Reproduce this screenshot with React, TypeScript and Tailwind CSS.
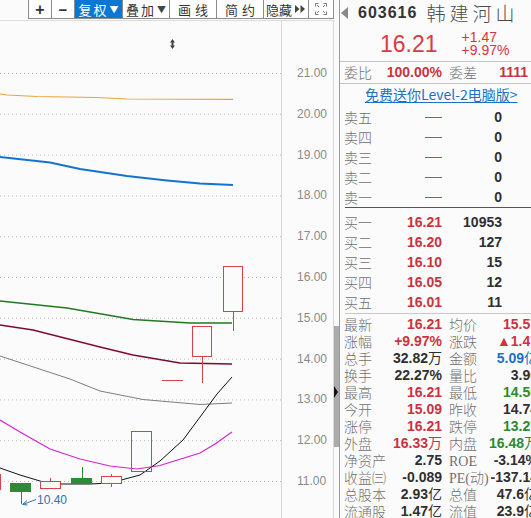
import React from "react";

const Y = (v: number) => 73 + (21 - v) * 40.8;
const ticks = [21, 20, 19, 18, 17, 16, 15, 14, 13, 12, 11];

const RED = "text-[#c9343f]";
const GREEN = "text-[#2d8a2d]";
const DARK = "text-[#2f2f2f]";
const BLUE = "text-[#1d6fc9]";

function Chart() {
  const red = "#d7414c";
  const bg = "#fbfbfb";
  return (
    <svg width={281} height={497} viewBox="0 21 281 497" className="block">
      {ticks.map((t) => (
        <line key={t} x1={0} x2={281} y1={Y(t) + 0.5} y2={Y(t) + 0.5} stroke="#bdbdbd" strokeWidth={1} strokeDasharray="1 3" />
      ))}
      <polyline fill="none" stroke="#e8a53c" strokeWidth={1.2} points="0,94 7,95 37,96.5 97,97.5 127,99 233,99.3" />
      <polyline fill="none" stroke="#1373cf" strokeWidth={2} points="0,157 50,162.5 80,169 127,176 167,180.5 200,183.5 233,185" />
      <polyline fill="none" stroke="#1f7a22" strokeWidth={1.3} points="0,301 67,308 133,319.5 190,323 232,323" />
      <polyline fill="none" stroke="#7c0b2e" strokeWidth={1.3} points="0,325 33,330 100,347 133,355 180,363 232,364" />
      <polyline fill="none" stroke="#7d7d7d" strokeWidth={1} points="0,356 70,379 100,391 143,399.5 200,404.5 232,403" />
      <polyline fill="none" stroke="#d323d3" strokeWidth={1.2} points="0,420 20,432 50,449 80,459 110,466 137,469 160,465.5 200,453 215,444 232,432" />
      <polyline fill="none" stroke="#111" strokeWidth={1} points="0,468 20,475 50,484 90,484 110,483 140,475 160,461 183,440 203,413 217,394 232,377" />
      <line x1={233.5} x2={233.5} y1={312} y2={331} stroke={red} />
      <rect x={223.5} y={266.5} width={19} height={45} fill={bg} stroke={red} />
      <line x1={202.5} x2={202.5} y1={357} y2={383} stroke={red} />
      <rect x={192.5} y={326.5} width={19} height={30} fill={bg} stroke={red} />
      <line x1={162} x2={183} y1={380.5} y2={380.5} stroke={red} />
      <rect x={131.5} y={431.5} width={20} height={40} fill="none" stroke={red} />
      <line x1={111.5} x2={111.5} y1={474} y2={487} stroke={red} />
      <rect x={101.5} y={476.5} width={20} height={7} fill={bg} stroke={red} />
      <line x1={82.5} x2={82.5} y1={467} y2={479} stroke="#2e8b33" />
      <rect x={71} y={478} width={21} height={6} fill="#2e8b33" />
      <line x1={50.5} x2={50.5} y1={478} y2={482} stroke={red} />
      <rect x={40.5} y={481.5} width={20} height={7} fill={bg} stroke={red} />
      <line x1={21.5} x2={21.5} y1={491} y2={504} stroke="#2e8b33" />
      <rect x={10} y={483} width={21} height={9} fill="#2e8b33" />
      <line x1={0.5} x2={0.5} y1={474} y2={490} stroke={red} />
      <line x1={36} y1={499.5} x2={24} y2={504} stroke="#2a72b5" strokeWidth={1} />
      <polyline fill="none" stroke="#2a72b5" strokeWidth={1} points="27,500.5 22.5,504.5 27.5,505" />
      <text x={37} y={503.5} fontSize={12} fill="#2a72b5" fontFamily="Liberation Sans, sans-serif">10.40</text>
      <polygon points="172.5,39 175,42.5 170,42.5" fill="#444" />
      <rect x={171.5} y={42} width={2} height={4} fill="#444" />
      <polygon points="170,45.5 175,45.5 172.5,49" fill="#444" />
    </svg>
  );
}

function Btn({ w, children, active }: { w: string; children: React.ReactNode; active?: boolean }) {
  return (
    <div
      className={`${w} flex items-center justify-center border-r border-[#8c8c8c] ${
        active ? "bg-[#0b77d4] text-white" : "bg-white text-[#333]"
      }`}
    >
      {children}
    </div>
  );
}

function Toolbar() {
  return (
    <div className="h-[21px] border-b border-[#dcdcdc]">
      <div className="ml-[28px] flex h-[19px] border-b border-l border-[#8c8c8c] text-[13px] leading-[17px] font-['Noto_Sans_CJK_SC',sans-serif]">
        <Btn w="w-[23px]">
          <span className="text-[16px] font-bold font-['Liberation_Sans',sans-serif]">+</span>
        </Btn>
        <Btn w="w-[23px]">
          <span className="text-[15px] font-bold font-['Liberation_Sans',sans-serif]">−</span>
        </Btn>
        <Btn w="w-[48px]" active>
          <span className="tracking-[2px]">复权</span>
          <span className="text-[9px] ml-[1px]">▼</span>
        </Btn>
        <Btn w="w-[47px]">
          <span className="tracking-[2px]">叠加</span>
          <span className="text-[9px] ml-[1px] text-[#444]">▼</span>
        </Btn>
        <Btn w="w-[47px]">
          <span className="tracking-[4px] pl-[4px]">画线</span>
        </Btn>
        <Btn w="w-[47px]">
          <span className="tracking-[4px] pl-[4px]">简约</span>
        </Btn>
        <Btn w="w-[45px]">
          <span>隐藏</span>
          <svg width={11} height={8} className="ml-[3px]">
            <polygon points="0,0 4.5,4 0,8" fill="#444" />
            <polygon points="5.5,0 10,4 5.5,8" fill="#444" />
          </svg>
        </Btn>
        <Btn w="w-[25px]">
          <svg width={12} height={12} viewBox="0 0 12 12">
            <g fill="none" stroke="#777" strokeWidth={1}>
              <polyline points="0.5,3.5 0.5,0.5 3.5,0.5" />
              <polyline points="8.5,0.5 11.5,0.5 11.5,3.5" />
              <polyline points="0.5,8.5 0.5,11.5 3.5,11.5" />
              <polyline points="8.5,11.5 11.5,11.5 11.5,8.5" />
              <line x1={2} y1={2} x2={4} y2={4} />
              <line x1={10} y1={2} x2={8} y2={4} />
              <line x1={2} y1={10} x2={4} y2={8} />
              <line x1={10} y1={10} x2={8} y2={8} />
            </g>
          </svg>
        </Btn>
      </div>
    </div>
  );
}

const LBL = "text-[14px] leading-[17px] text-[#707070] font-light font-['Noto_Sans_CJK_SC',sans-serif]";
const VAL = "text-[14px] leading-[17px] font-bold text-right font-['Liberation_Sans','Noto_Sans_CJK_SC',sans-serif]";

function BookRow({ label, price, vol, sell }: { label: string; price: string; vol: string; sell?: boolean }) {
  return (
    <div className="flex h-[20px] items-center pl-[4px]">
      <span className={`w-[44px] ${LBL}`}>{label}</span>
      <div className="flex w-[54px] justify-end">
        {sell ? <div className="h-[1px] w-[17px] bg-[#2f9a2f]" /> : <span className={`${VAL} ${RED}`}>{price}</span>}
      </div>
      <span className={`w-[60px] ${VAL} ${DARK}`}>{vol}</span>
    </div>
  );
}

type Stat = { l1: React.ReactNode; v1: React.ReactNode; c1: string; l2: React.ReactNode; v2: React.ReactNode; c2: string };

const SERIF = "font-['Liberation_Serif',serif] font-normal";

const stats: Stat[] = [
  { l1: "最新", v1: "16.21", c1: RED, l2: "均价", v2: "15.57", c2: RED },
  { l1: "涨幅", v1: "+9.97%", c1: RED, l2: "涨跌", v2: "▲1.47", c2: RED },
  { l1: "总手", v1: <>32.82<span className="font-normal">万</span></>, c1: DARK, l2: "金额", v2: <>5.09<span className="font-normal">亿</span></>, c2: BLUE },
  { l1: "换手", v1: "22.27%", c1: DARK, l2: "量比", v2: "3.90", c2: DARK },
  { l1: "最高", v1: "16.21", c1: RED, l2: "最低", v2: "14.56", c2: GREEN },
  { l1: "今开", v1: "15.09", c1: RED, l2: "昨收", v2: "14.74", c2: DARK },
  { l1: "涨停", v1: "16.21", c1: RED, l2: "跌停", v2: "13.27", c2: GREEN },
  { l1: "外盘", v1: <>16.33<span className="font-normal">万</span></>, c1: RED, l2: "内盘", v2: <>16.48<span className="font-normal">万</span></>, c2: GREEN },
  { l1: "净资产", v1: "2.75", c1: DARK, l2: <span className={SERIF}>ROE</span>, v2: "-3.14%", c2: DARK },
  { l1: "收益㈢", v1: "-0.089", c1: DARK, l2: <><span className={SERIF}>PE(</span>动<span className={SERIF}>)</span></>, v2: "-137.14", c2: DARK },
  { l1: "总股本", v1: <>2.93<span className="font-normal">亿</span></>, c1: DARK, l2: "总值", v2: <>47.6<span className="font-normal">亿</span></>, c2: DARK },
  { l1: "流通股", v1: <>1.47<span className="font-normal">亿</span></>, c1: DARK, l2: "流值", v2: <>23.9<span className="font-normal">亿</span></>, c2: DARK },
];

function Panel() {
  return (
    <div className="flex-1 overflow-hidden border-l border-[#9a9a9a] bg-[#fbfbfb]">
      <div className="w-[200px]">
        <div className="h-[61px]">
          <div className="flex h-[26px] items-center">
            <div className="ml-[1px] h-0 w-0 border-y-[6px] border-r-[7px] border-y-transparent border-r-[#8a8a8a]" />
            <span className="ml-[10px] text-[16px] font-bold tracking-[1px] text-[#333] font-['Liberation_Sans',sans-serif]">603616</span>
            <span className="ml-[9px] text-[19px] tracking-[4px] text-[#4a4a4a] font-light font-['Noto_Sans_CJK_SC',sans-serif] leading-[24px]">韩建河山</span>
          </div>
          <div className="flex h-[35px] items-center">
            <span className="ml-[40px] text-[23px] text-[#dc3a43] font-['Liberation_Sans',sans-serif] leading-[26px]">16.21</span>
            <div className="ml-[24px] flex flex-col text-[14px] leading-[13px] text-[#d9343d] font-['Liberation_Sans',sans-serif]">
              <span>+1.47</span>
              <span>+9.97%</span>
            </div>
          </div>
        </div>
        <div className="flex h-[23px] items-center border-y border-[#c4c4c4] pl-[4px]">
          <span className={`w-[40px] ${LBL}`}>委比</span>
          <span className={`w-[58px] ${VAL} ${RED}`}>100.00%</span>
          <span className={`ml-[7px] w-[40px] ${LBL}`}>委差</span>
          <span className={`w-[39px] ${VAL} ${RED}`}>1111</span>
        </div>
        <div className="flex h-[20px] items-center pl-[25px]">
          <span className="text-[14px] leading-[16px] text-[#1f6fc5] underline underline-offset-2 font-['Noto_Sans_CJK_SC',sans-serif]">免费送你Level-2电脑版&gt;</span>
        </div>
        <div className="pt-[3px]">
          {["卖五", "卖四", "卖三", "卖二", "卖一"].map((l) => (
            <BookRow key={l} label={l} price="" vol="0" sell />
          ))}
        </div>
        <div className="ml-[5px] h-[1px] bg-[#555]" />
        <div className="pt-[4px]">
          <BookRow label="买一" price="16.21" vol="10953" />
          <BookRow label="买二" price="16.20" vol="127" />
          <BookRow label="买三" price="16.10" vol="15" />
          <BookRow label="买四" price="16.05" vol="12" />
          <BookRow label="买五" price="16.01" vol="11" />
        </div>
        <div className="ml-[5px] mt-[1px] h-[1px] bg-[#c8c8c8]" />
        <div className="pt-[2px]">
          {stats.map((s, i) => (
            <div key={i} className="flex h-[17px] items-center pl-[4px] whitespace-nowrap">
              <span className={`w-[44px] ${LBL}`}>{s.l1}</span>
              <span className={`w-[54px] ${VAL} ${s.c1}`}>{s.v1}</span>
              <span className={`ml-[7px] w-[40px] ${LBL}`}>{s.l2}</span>
              <span className={`w-[49px] ${VAL} ${s.c2}`}>{s.v2}</span>
            </div>
          ))}
        </div>
      </div>
    </div>
  );
}

export default function App() {
  return (
    <div className="flex h-[518px] w-[531px] overflow-hidden bg-[#fbfbfb]">
      <div className="flex w-[334px] flex-col">
        <Toolbar />
        <div className="flex flex-1">
          <div className="w-[282px] border-r border-[#d8d8d8]">
            <Chart />
          </div>
          <div className="relative w-[52px] border-r border-[#d8d8d8]">
            {ticks.map((t) => (
              <span
                key={t}
                className="absolute left-[15px] text-[12px] leading-[14px] text-[#8a8a8a] font-['Liberation_Sans',sans-serif]"
                style={{ top: Y(t) - 21 - 7 }}
              >
                {t.toFixed(2)}
              </span>
            ))}
          </div>
        </div>
      </div>
      <div className="relative flex w-[5px] flex-col">
        <div className="mt-[326px] h-[121px] w-[5px] bg-[#ababab]" />
        <div className="absolute left-0 top-[386px] h-0 w-0 border-y-[6px] border-l-[4px] border-y-transparent border-l-[#111]" />
      </div>
      <Panel />
    </div>
  );
}
